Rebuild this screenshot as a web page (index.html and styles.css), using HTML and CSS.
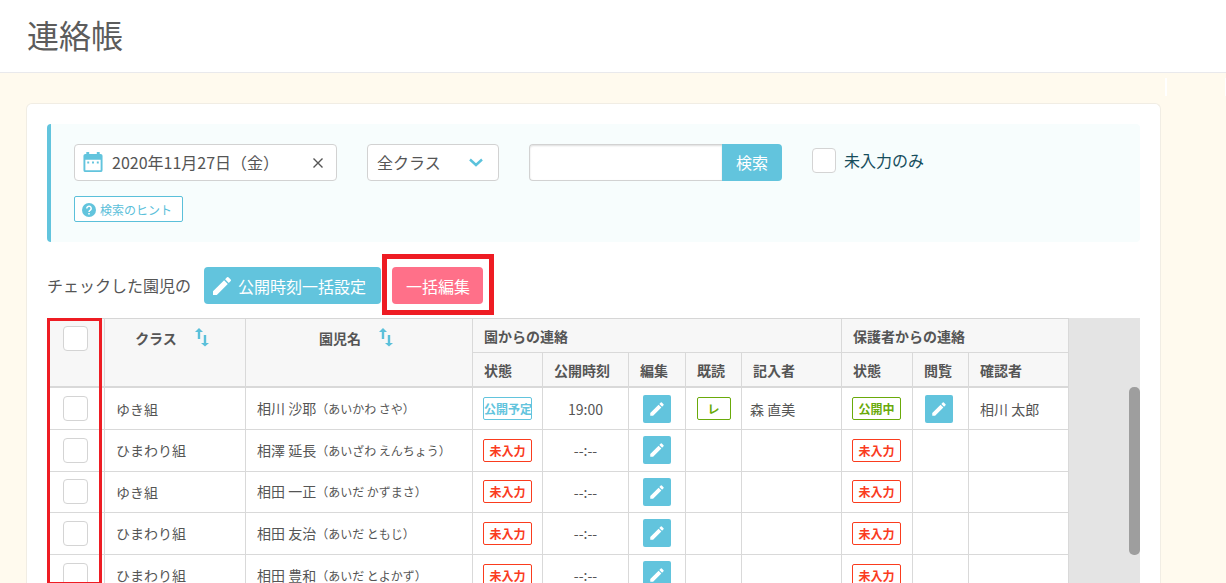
FILE: index.html
```html
<!DOCTYPE html>
<html lang="ja">
<head>
<meta charset="utf-8">
<title>連絡帳</title>
<link rel="stylesheet" href="styles.css">
</head>
<body>
<svg class="sprite" aria-hidden="true">
  <symbol id="pencil" viewBox="0 0 24 24"><path d="M3 17.200V21h3.800L17.800 9.900l-3.700-3.700L3 17.200zM20.700 7a1 1 0 0 0 0-1.400l-2.300-2.300a1 1 0 0 0-1.400 0l-1.900 1.900 3.700 3.700L20.700 7z"/></symbol>
  <symbol id="sort" viewBox="0 0 14 19"><path d="M2.800 11V4H0l4-4 4 4H5.200v7zM8.800 7h2.400v8H14l-4 3.500L6 15h2.800z"/></symbol>
</svg>
<div class="page">
  <header class="page-header"><h1 class="title">連絡帳</h1></header>
  <span class="corner-marks"></span>
  <main class="card">
    <form class="search">
      <div class="search-row">
        <div class="field date-field">
          <svg class="calendar" viewBox="0 0 20 22" aria-hidden="true"><path fill-rule="evenodd" d="M3 2V0h3v2h8V0h3v2h1a2 2 0 0 1 2 2v15a2 2 0 0 1-2 2H2a2 2 0 0 1-2-2V4a2 2 0 0 1 2-2zM2 8v11h16V8z"/><path d="M4 10h2v2H4zM9 10h2v2H9zM14 10h2v2h-2z"/></svg>
          <input class="date-input" type="text" aria-label="日付" value="2020年11月27日（金）">
          <button class="clear" type="button" aria-label="クリア"><svg viewBox="0 0 10 10" width="10" height="10"><path d="M0.500 0.500l9 9M9.500 0.500l-9 9"/></svg></button>
        </div>
        <div class="field class-field">
          <select class="class-select" aria-label="クラス"><option>全クラス</option></select>
          <svg class="chevron" viewBox="0 0 14 9" aria-hidden="true"><path d="M1 1.500l6 5.500 6-5.500"/></svg>
        </div>
        <div class="keyword">
          <input class="keyword-input" type="text" aria-label="キーワード">
          <button class="keyword-button" type="button">検索</button>
        </div>
        <label class="only-empty"><input class="check" type="checkbox">未入力のみ</label>
      </div>
      <button class="hint" type="button"><svg viewBox="0 0 14 14" width="14" height="14" aria-hidden="true"><circle cx="7" cy="7" r="7" fill="#62c4dd"/><path d="M4.800 5.500a2.200 2.200 0 1 1 3.500 1.700C7.400 7.800 7 8.100 7 9" fill="none" stroke="#fff" stroke-width="1.500"/><path d="M6.200 10h1.600v1.600H6.200z" fill="#fff"/></svg>検索のヒント</button>
    </form>
    <div class="actions">
      <span class="actions-label">チェックした園児の</span>
      <button class="button" type="button"><svg class="button-icon"><use href="#pencil"/></svg>公開時刻一括設定</button>
      <span class="highlight"><button class="button pink" type="button">一括編集</button></span>
    </div>
    <div class="list">
      <table class="table">
        <colgroup><col class="w58"><col class="w141"><col class="w227"><col class="w70"><col class="w86"><col class="w57"><col class="w56"><col class="w100"><col class="w71"><col class="w56"><col class="w100"></colgroup>
        <thead>
          <tr class="groups">
            <th rowspan="2" class="tall pick"><input class="check" type="checkbox" aria-label="すべて選択"></th>
            <th rowspan="2" class="tall"><span class="sortable">クラス<svg class="sort"><use href="#sort"/></svg></span></th>
            <th rowspan="2" class="tall"><span class="sortable">園児名<svg class="sort"><use href="#sort"/></svg></span></th>
            <th colspan="5">園からの連絡</th>
            <th colspan="3">保護者からの連絡</th>
          </tr>
          <tr class="subs"><th>状態</th><th class="time">公開時刻</th><th>編集</th><th>既読</th><th>記入者</th><th>状態</th><th>閲覧</th><th>確認者</th></tr>
        </thead>
        <tbody>
          <tr><td class="pick"><input class="check" type="checkbox" aria-label="相川 沙耶"></td><td>ゆき組</td><td>相川 沙耶<span class="kana">（あいかわ さや）</span></td><td><span class="badge blue">公開予定</span></td><td class="mid">19:00</td><td class="mid"><button class="edit" type="button" aria-label="編集"><svg><use href="#pencil"/></svg></button></td><td class="mid"><span class="badge green read">レ</span></td><td class="writer">森 直美</td><td><span class="badge green">公開中</span></td><td class="view"><button class="edit" type="button" aria-label="閲覧"><svg><use href="#pencil"/></svg></button></td><td>相川 太郎</td></tr>
          <tr><td class="pick"><input class="check" type="checkbox" aria-label="相澤 延長"></td><td>ひまわり組</td><td>相澤 延長<span class="kana">（あいざわ えんちょう）</span></td><td><span class="badge red">未入力</span></td><td class="mid">--:--</td><td class="mid"><button class="edit" type="button" aria-label="編集"><svg><use href="#pencil"/></svg></button></td><td></td><td></td><td><span class="badge red">未入力</span></td><td></td><td></td></tr>
          <tr><td class="pick"><input class="check" type="checkbox" aria-label="相田 一正"></td><td>ゆき組</td><td>相田 一正<span class="kana">（あいだ かずまさ）</span></td><td><span class="badge red">未入力</span></td><td class="mid">--:--</td><td class="mid"><button class="edit" type="button" aria-label="編集"><svg><use href="#pencil"/></svg></button></td><td></td><td></td><td><span class="badge red">未入力</span></td><td></td><td></td></tr>
          <tr><td class="pick"><input class="check" type="checkbox" aria-label="相田 友治"></td><td>ひまわり組</td><td>相田 友治<span class="kana">（あいだ ともじ）</span></td><td><span class="badge red">未入力</span></td><td class="mid">--:--</td><td class="mid"><button class="edit" type="button" aria-label="編集"><svg><use href="#pencil"/></svg></button></td><td></td><td></td><td><span class="badge red">未入力</span></td><td></td><td></td></tr>
          <tr><td class="pick"><input class="check" type="checkbox" aria-label="相田 豊和"></td><td>ひまわり組</td><td>相田 豊和<span class="kana">（あいだ とよかず）</span></td><td><span class="badge red">未入力</span></td><td class="mid">--:--</td><td class="mid"><button class="edit" type="button" aria-label="編集"><svg><use href="#pencil"/></svg></button></td><td></td><td></td><td><span class="badge red">未入力</span></td><td></td><td></td></tr>
        </tbody>
      </table>
      <span class="column-frame"></span>
      <span class="scroll-thumb"></span>
    </div>
  </main>
</div>
</body>
</html>
```
FILE: styles.css
```css
* { box-sizing: border-box; }
body {
  margin: 0;
  color: #555;
  background: #fffaee;
  font-family: "Noto Sans CJK JP", sans-serif;
  font-size: 14px;
  line-height: 20px;
}
button, input, select { font: inherit; color: inherit; margin: 0; }
button { padding: 0; border: 0; white-space: nowrap; }
svg { flex: none; fill: currentColor; }
.sprite { display: none; }
.page {
  position: relative;
  display: flex;
  flex-direction: column;
  height: 100vh;
  overflow: hidden;
}
.page-header {
  flex: none;
  padding: 10px 27px 14px;
  background: #fff;
  border-bottom: 1px solid #e9e9ec;
}
.title { margin: 0; font-size: 32px; line-height: 48px; font-weight: 400; color: #5c5c5c; }
.corner-marks {
  position: absolute;
  top: 78px;
  right: 0;
  width: 61px;
  height: 18px;
  border: solid #fff;
  border-width: 0 1px 0 2px;
}
.card {
  flex: 1;
  min-height: 0;
  display: flex;
  flex-direction: column;
  margin: 30px 65px 0 26px;
  padding: 20px 20px 0;
  background: #fff;
  border: 1px solid #f1ede4;
  border-bottom: 0;
  border-radius: 6px 6px 0 0;
}
.search {
  flex: none;
  padding: 20px 24px 20px 23px;
  background: #f7fdfd;
  border-left: 4px solid #62c4dd;
  border-radius: 4px;
}
.search-row { display: flex; gap: 30px; font-size: 16px; line-height: 24px; }
.field {
  position: relative;
  display: flex;
  align-items: center;
  height: 37px;
  background: #fff;
  border: 1px solid #d2d2d2;
  border-radius: 4px;
}
.date-field { width: 263px; padding: 0 12px 0 8px; }
.calendar { width: 20px; height: 21px; color: #62c4dd; }
.date-input { flex: 1; min-width: 0; padding: 0 0 2px 9px; border: 0; background: none; }
.clear { display: flex; padding: 1px; background: none; }
.clear svg { stroke: #555; stroke-width: 1.4; fill: none; }
.class-field { width: 132px; }
.class-select {
  appearance: none;
  width: 100%;
  height: 100%;
  padding: 0 30px 2px 9px;
  border: 0;
  background: none;
}
.chevron {
  position: absolute;
  right: 15px;
  top: 13px;
  width: 14px;
  height: 9px;
  fill: none;
  stroke: #5bc2dc;
  stroke-width: 2.4;
  pointer-events: none;
}
.keyword { display: flex; }
.keyword-input {
  width: 193px;
  height: 37px;
  padding: 0 10px;
  background: #fff;
  border: 1px solid #d2d2d2;
  border-right: 0;
  border-radius: 4px 0 0 4px;
  box-shadow: inset 0 1px 2px #ddd;
}
.keyword-button { width: 60px; padding-bottom: 2px; color: #fff; background: #62c4dd; border-radius: 0 4px 4px 0; }
.only-empty { display: flex; align-items: center; gap: 8px; height: 32px; color: #164d5c; }
.check {
  appearance: none;
  display: block;
  flex: none;
  width: 25px;
  height: 25px;
  background: #fff;
  border: 1px solid #d4d4d4;
  border-radius: 4px;
}
.only-empty .check { width: 24px; }
.hint {
  display: flex;
  align-items: center;
  gap: 4px;
  height: 26px;
  margin-top: 15px;
  padding: 1px 10px 0 7px;
  font-size: 12px;
  color: #5bc0da;
  background: #fff;
  border: 1px solid #5bc0da;
  border-radius: 2px;
}
.actions {
  flex: none;
  display: flex;
  align-items: center;
  padding: 25px 0 14px;
  font-size: 16px;
  line-height: 24px;
}
.actions-label { margin-right: 13px; padding-bottom: 2px; }
.button {
  display: flex;
  align-items: center;
  height: 37px;
  padding: 0 15px 0 6px;
  color: #fff;
  background: #62c4dd;
  border-radius: 4px;
}
.button-icon { width: 24px; height: 24px; margin-right: 4px; }
.button.pink { padding: 0 13px 0 14px; background: #ff7089; }
.highlight { position: relative; margin-left: 11px; }
.highlight::after {
  content: "";
  position: absolute;
  inset: -13px -11px -11px -10px;
  border: 5px solid #ee1c23;
  pointer-events: none;
}
.list { position: relative; flex: 1; min-height: 0; overflow: hidden; background: #e4e4e4; }
.table {
  table-layout: fixed;
  width: min-content;
  border-collapse: separate;
  border-spacing: 0;
  border-top: 1px solid #d6d6d6;
}
.w56 { width: 56px; }
.w57 { width: 57px; }
.w58 { width: 58px; }
.w70 { width: 70px; }
.w71 { width: 71px; }
.w86 { width: 86px; }
.w100 { width: 100px; }
.w141 { width: 141px; }
.w227 { width: 227px; }
th, td {
  padding: 0 0 0 11px;
  text-align: left;
  white-space: nowrap;
  border-right: 1px solid #d9d9d9;
  border-bottom: 1px solid #d9d9d9;
}
th { background: #f7f7f7; font-weight: 700; }
td { height: 42px; background: #fff; }
tr:nth-child(n+2) td { padding-bottom: 1px; }
tr:nth-child(3n) td { height: 41px; }
.groups { height: 34px; }
.subs { height: 35px; }
.subs th, .tall { border-bottom-width: 2px; }
.tall { padding: 7px 0 0; vertical-align: top; }
.pick { padding-left: 16px; }
.mid { padding: 0; text-align: center; }
.sortable { display: flex; justify-content: center; gap: 18px; padding: 2px 6px 0 0; }
.sort { width: 14px; height: 19px; color: #5bc0da; }
.kana { font-size: 12px; }
.badge {
  display: block;
  width: 49px;
  height: 23px;
  margin-left: -1px;
  font-size: 12px;
  line-height: 21px;
  font-weight: 700;
  text-align: center;
  border: 1px solid;
  border-radius: 2px;
}
.red { color: #fa3c1e; }
.blue { color: #62c4dd; }
.green { color: #6aaa0a; }
.read { width: 34px; margin: 0 auto; }
.writer { padding-left: 8px; }
.edit {
  display: flex;
  align-items: center;
  justify-content: center;
  width: 28px;
  height: 28px;
  color: #fff;
  background: #62c4dd;
  border-radius: 2px;
}
.mid .edit { margin: 0 auto; }
.view { padding-left: 12px; }
.edit svg { width: 18px; height: 18px; }
.column-frame {
  position: absolute;
  inset: 0 auto 0 0;
  width: 55px;
  border: 3px solid #ee1c23;
  border-bottom-width: 1px;
}
.scroll-thumb {
  position: absolute;
  top: 69px;
  right: 0;
  width: 11px;
  height: 168px;
  background: #9e9e9e;
  border-radius: 5px;
}
```
